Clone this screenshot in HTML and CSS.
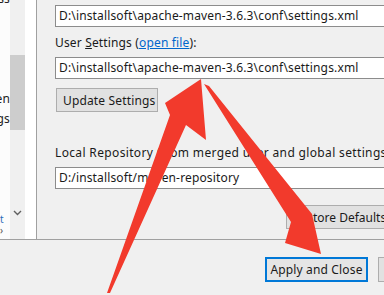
FILE: index.html
```html
<!DOCTYPE html>
<html lang="en">
<head>
  <meta charset="UTF-8">
  <title>Maven Preferences</title>
  <link rel="stylesheet" href="styles.css">
</head>
<body>
  <div class="top">
    <div class="sidebar">
      <div class="tree">
        <div class="row">Process</div>
        <div class="row"></div>
        <div class="row"></div>
        <div class="row"></div>
        <div class="row"></div>
        <div class="row">Maven</div>
        <div class="row">User Settings</div>
        <div class="tree-foot">
          <span class="link-frag">t</span>
          <span class="caret">&#8250;</span>
        </div>
      </div>
      <div class="scrollbar">
        <div class="thumb"></div>
        <svg class="down" width="9" height="6" viewBox="0 0 9 6"><path d="M1 1 L4.5 4.5 L8 1" fill="none" stroke="#606060" stroke-width="1.4"/></svg>
      </div>
      <div class="gutter"></div>
    </div>

    <div class="main">
      <div class="field">D:\installsoft\apache-maven-3.6.3\conf\settings.xml</div>

      <div class="label">User <u>S</u>ettings (<a class="link" href="#">open file</a>):</div>
      <div class="field">D:\installsoft\apache-maven-3.6.3\conf\settings.xml</div>

      <button class="btn btn-update">Update Settings</button>

      <div class="label label-local">Local Repository (from merged user and global settings):</div>
      <div class="field">D:/installsoft/maven-repository</div>

      <button class="btn btn-restore">Restore Defaults</button>
    </div>
  </div>

  <div class="bottom">
    <button class="btn btn-apply">Apply and Close</button>
    <button class="btn btn-cancel">Cancel</button>
  </div>

  <!-- red annotation arrows drawn over the dialog -->
  <svg class="marks" width="384" height="295" viewBox="0 0 384 295">
    <polygon fill="#f23a2c" points="107,293 170,115 165,103 201,79 206,140 186,125 110,293"/>
    <polygon fill="#f23a2c" points="204,84 291,222 285,243 321,254 312,214 209,86"/>
  </svg>
</body>
</html>
```

FILE: styles.css
```css
* {
  box-sizing: border-box;
}
body {
  margin: 0;
  width: 384px;
  height: 295px;
  overflow: hidden;
  position: relative;
  background-color: #f0f0f0;
  font-family: "Noto Sans", "Open Sans", sans-serif;
  font-size: 12px;
  letter-spacing: 0.15px;
  color: #1a1a1a;
}
.top {
  display: flex;
  height: 240px;
  border-bottom: 1px solid #a0a0a0;
}
.sidebar {
  display: flex;
  width: 37px;
  border-right: 1px solid #a0a0a0;
  background: #fcfcfc;
}
.tree {
  width: 10px;
  overflow: hidden;
  display: flex;
  flex-direction: column;
  margin-top: -11px;
}
.row {
  height: 20px;
  line-height: 20px;
  white-space: nowrap;
  direction: rtl;
  text-align: right;
  color: #222;
}
.tree-foot {
  margin-top: 85px;
  display: flex;
  flex-direction: column;
  line-height: 11px;
  font-size: 10px;
}
.link-frag {
  color: #2a6bb8;
}
.caret {
  color: #555;
}
.scrollbar {
  width: 15px;
  background: #f0f0f0;
  display: flex;
  flex-direction: column;
  align-items: center;
}
.thumb {
  width: 15px;
  height: 75px;
  margin-top: 55px;
  background: #cdcdcd;
}
.down {
  margin-top: 80px;
}
.gutter {
  width: 11px;
  background: #ffffff;
}
.main {
  flex: 1;
  overflow: hidden;
  padding: 5px 0 0 18px;
  display: flex;
  flex-direction: column;
  align-items: flex-start;
}
.field {
  width: 360px;
  height: 22px;
  line-height: 20px;
  padding: 0 3px;
  background: #ffffff;
  border: 1px solid #8c8c8c;
  white-space: nowrap;
  flex-shrink: 0;
}
.label {
  margin-top: 8px;
  height: 16px;
  line-height: 16px;
  margin-bottom: 6px;
  white-space: nowrap;
}
.label u {
  text-decoration-thickness: 1px;
}
.link {
  color: #0066cc;
  text-decoration: underline;
}
.label-local {
  margin-top: 33px;
  letter-spacing: 0.35px;
}
.btn {
  height: 24px;
  padding: 0 6px;
  font-family: inherit;
  font-size: 12px;
  letter-spacing: 0.15px;
  color: #1a1a1a;
  background: #e1e1e1;
  border: 1px solid #adadad;
  white-space: nowrap;
  flex-shrink: 0;
}
.btn-update {
  margin-top: 9px;
  margin-left: 1px;
  width: 102px;
}
.btn-restore {
  margin-top: 16px;
  margin-left: 231px;
  width: 110px;
  text-align: left;
  padding-left: 6px;
  letter-spacing: 0;
}
.bottom {
  display: flex;
  gap: 10px;
  padding: 17px 0 0 265px;
}
.btn-apply {
  width: 103px;
  height: 25px;
  padding: 0;
  border: 2px solid #0078d7;
  background: #e5e5e5;
}
.btn-cancel {
  width: 70px;
  height: 25px;
}
.marks {
  position: absolute;
  top: 0;
  left: 0;
  pointer-events: none;
}
```
